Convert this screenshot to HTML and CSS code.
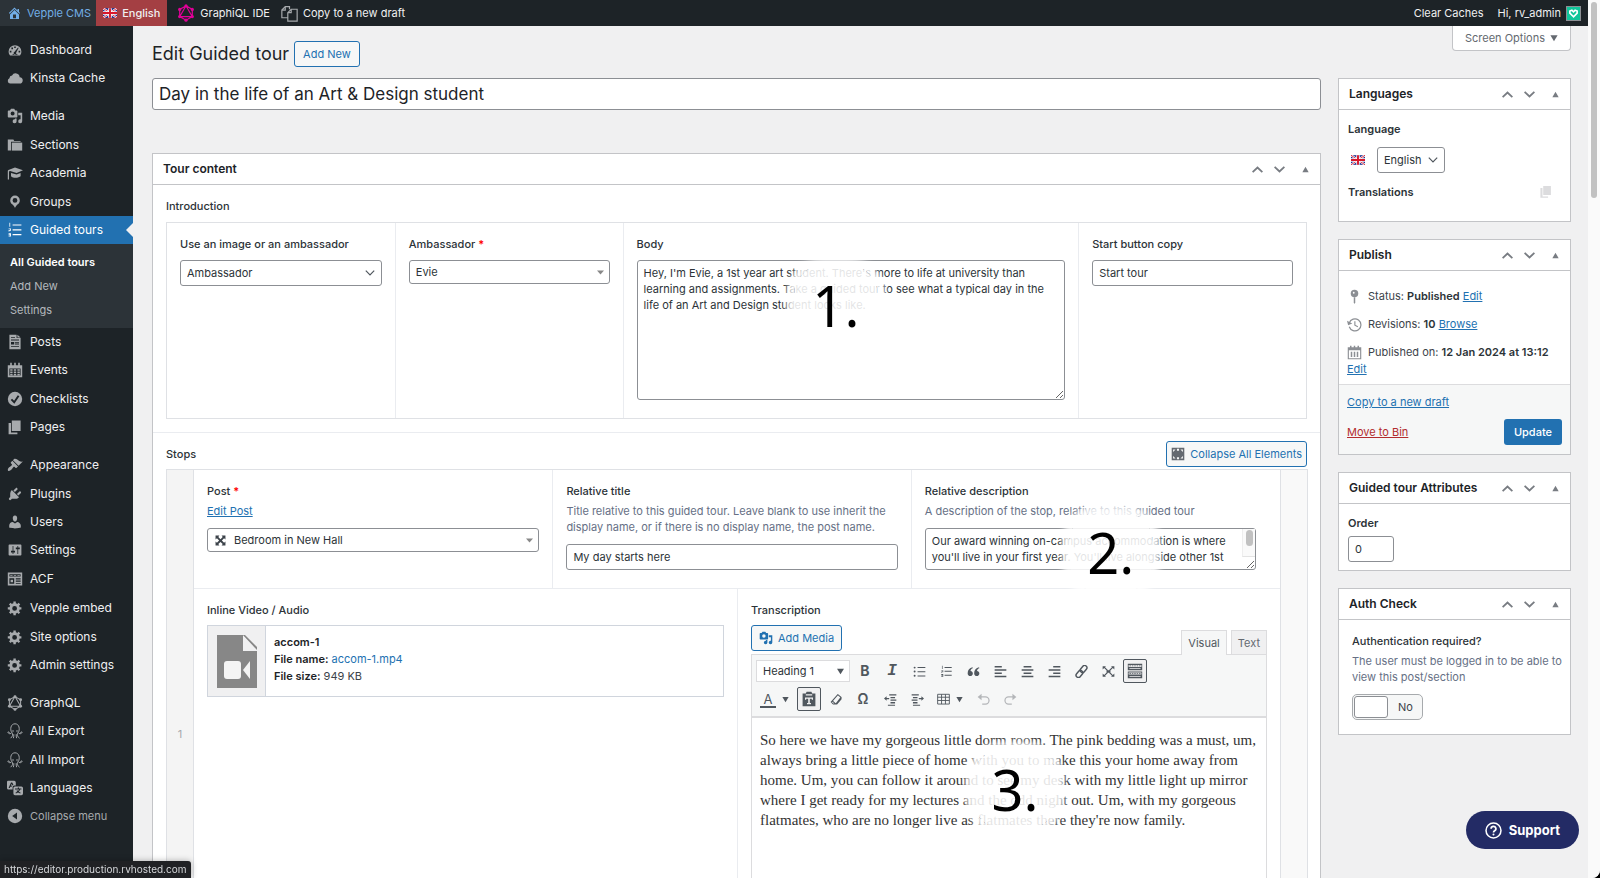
FILE: index.html
```html
<!DOCTYPE html>
<html lang="en">
<head>
  <meta charset="UTF-8" />
  <meta name="viewport" content="width=device-width, initial-scale=1.0" />
  <title>Edit Guided tour</title>
  <link rel="stylesheet" href="styles.css">
</head>
<body>
  <svg class="sprite" aria-hidden="true">
    <symbol id="i-home" viewBox="0 0 20 20"><path d="M16 8.500l1.530 1.530-1.060 1.060L10 4.600l-6.470 6.490-1.060-1.060L10 2.500l4 4v-2h2v4zm-6-2.460l6 5.990V18H4v-5.970zM12 17v-5H8v5h4z"/></symbol>
    <symbol id="i-flag" viewBox="0 0 16 11"><path fill="#1d2f8f" d="M0 0h16v11H0z"/><path stroke="#fff" stroke-width="2.400" d="M0 0l16 11M16 0L0 11"/><path stroke="#d8182c" stroke-width="1" d="M0 0l16 11M16 0L0 11"/><path stroke="#fff" stroke-width="4" d="M8 0v11M0 5.500h16"/><path stroke="#d8182c" stroke-width="2.200" d="M8 0v11M0 5.500h16"/></symbol>
    <symbol id="i-graphql" viewBox="0 0 20 20"><path fill="none" stroke="currentColor" stroke-width="1.300" d="M10 2l7 4v8l-7 4-7-4V6zM10 2L3 14h14z"/><circle cx="10" cy="2" r="1.800"/><circle cx="17" cy="6" r="1.800"/><circle cx="17" cy="14" r="1.800"/><circle cx="10" cy="18" r="1.800"/><circle cx="3" cy="14" r="1.800"/><circle cx="3" cy="6" r="1.800"/></symbol>
    <symbol id="i-copy" viewBox="0 0 20 20"><path fill="none" stroke="currentColor" stroke-width="1.400" d="M8 15H1V6l4-4h5v3M5 2v4H1M8 19V9l4-4h7v14zM12 5v4H8"/></symbol>
    <symbol id="i-heart" viewBox="0 0 16 16"><path fill="#10c59a" d="M0 0h16v16H0z"/><path fill="none" stroke="#fff" stroke-width="2" d="M8 12L3.500 7.500 3.500 5 6 4l2 2 2-2 2.500 1v2.500z"/></symbol>
    <symbol id="i-dashboard" viewBox="0 0 20 20"><path fill-rule="evenodd" d="M3.760 17h12.480c1.100-1.400 1.760-3.100 1.760-5a8 8 0 0 0-16 0c0 1.900.660 3.600 1.760 5zM9 5.500h2v2H9zM5.500 7h2v2h-2zM3.500 11h2v2h-2zM14.500 11h2v2h-2zM13.800 7l.7.600-3 5.400a1.700 1.700 0 1 1-2-.900zM7 15h6v1H7z"/></symbol>
    <symbol id="i-cloud" viewBox="0 0 20 20"><path d="M15.800 9a5 5 0 0 0-9.500-2A3.500 3.500 0 0 0 3 10.200 3.600 3.600 0 0 0 4 17h11.500A4 4 0 0 0 15.800 9z"/></symbol>
    <symbol id="i-media" viewBox="0 0 20 20"><path fill-rule="evenodd" d="M13 11V4c0-.550-.450-1-1-1h-1.670L9 1H5L3.670 3H2c-.550 0-1 .450-1 1v7c0 .550.450 1 1 1h10c.550 0 1-.450 1-1zM7 4.500a2.500 2.500 0 1 1 0 5 2.500 2.500 0 0 1 0-5zM14 6h5v10.500a2.500 2.500 0 1 1-2-2.450V9h-3V6zm-4 8.050V13h2v3.500a2.500 2.500 0 1 1-2-2.450z"/></symbol>
    <symbol id="i-folder" viewBox="0 0 20 20"><path d="M1 3h7l1 2h8v1H5v11H1z"/><path d="M6 7h13v10H6z"/></symbol>
    <symbol id="i-learn" viewBox="0 0 20 20"><path d="M10 3l10 3.500-8 3.500-8-2.500c-1 0-1.500.500-1.500 1.500v9H1V8c0-1 .500-2 1.500-2z"/><path d="M5 10l7 2 5-2v4c-2 2-9 3-12 0z"/></symbol>
    <symbol id="i-location" viewBox="0 0 20 20"><path fill-rule="evenodd" d="M10 2a6 6 0 0 0-6 6c0 2.020 1.170 3.710 2.530 4.890 1.300 1.100 3 3.100 3.470 4.540.470-1.440 2.170-3.440 3.470-4.540C14.830 11.710 16 10.020 16 8a6 6 0 0 0-6-6zm0 3a3 3 0 1 1 0 6 3 3 0 0 1 0-6z"/></symbol>
    <symbol id="i-ol" viewBox="0 0 20 20"><path d="M7 3h11v1.500H7zM7 9h11v1.500H7zM7 15h11v1.500H7zM3 1h1v5H3zM2 8h3v3H3v1H2v-2h2V9H2zM2 14h3v4H2v-1h2v-1H2z"/></symbol>
    <symbol id="i-doc" viewBox="0 0 20 20"><path fill-rule="evenodd" d="M3 1h9v4h5v14H3zM13 1l4 3.500h-4zM5 4h5v1H5zM5 7h10v1H5zM5 10h4v3H5zM10 10h5v1h-5zM10 12h5v1h-5zM5 15h10v1H5z"/></symbol>
    <symbol id="i-calendar" viewBox="0 0 20 20"><path fill-rule="evenodd" d="M1 4h3V1h2v3h3V1h2v3h3V1h2v3h3v15H1zM3 8h14v9H3z"/><path d="M4 9h3v2H4zM8.500 9h3v2h-3zM13 9h3v2h-3zM4 12h3v2H4zM8.500 12h3v2h-3zM13 12h3v2h-3zM4 15h3v2H4zM8.500 15h3v2h-3zM13 15h3v2h-3z"/></symbol>
    <symbol id="i-check" viewBox="0 0 20 20"><circle cx="10" cy="10" r="9"/><path fill="none" stroke="#1d2327" stroke-width="2.400" d="M5.500 10.500l3.500 3.500 5.500-8"/></symbol>
    <symbol id="i-page" viewBox="0 0 20 20"><path d="M6 15V2h11v13zM5 17h8v2H2V5h3z"/></symbol>
    <symbol id="i-brush" viewBox="0 0 20 20"><path d="M14.480 11.060L7.410 3.990l1.500-1.500c.500-.560 2.300-.470 3.510.320 1.210.800 1.430 1.280 2.910 2.100 1.180.640 2.450 1.260 4.450.850zm-.710.710L6.700 4.700 4.930 6.470c-.390.390-.390 1.020 0 1.410l1.060 1.060c.390.390.390 1.030 0 1.420-.600.600-1.430 1.110-2.210 1.690-.350.260-.700.530-1.010.840C1.430 14.230.400 16.080 1.400 17.070c.990 1 2.840-.030 4.180-1.360.310-.310.580-.660.850-1.020.570-.780 1.080-1.610 1.690-2.210.390-.390 1.020-.390 1.410 0l1.060 1.060c.390.390 1.020.390 1.410 0z"/></symbol>
    <symbol id="i-plug" viewBox="0 0 20 20"><path d="M13.110 4.360L9.870 7.600 8 5.730l3.240-3.240c.350-.340 1.050-.200 1.560.320.520.510.660 1.210.310 1.550zm-8 1.770l.910-1.120 9.010 9.010-1.190.840c-.710.710-2.630 1.160-3.820 1.160H6.140L4.900 17.260c-.590.590-1.540.590-2.120 0-.590-.580-.590-1.530 0-2.120l1.240-1.240v-3.880c0-1.130.400-3.190 1.090-3.890zm7.260 3.970l3.240-3.240c.340-.350 1.040-.210 1.550.310.520.510.660 1.210.310 1.550l-3.240 3.250z"/></symbol>
    <symbol id="i-user" viewBox="0 0 20 20"><path d="M10 9.250c-2.270 0-2.730-3.440-2.730-3.440C7 4.020 7.820 2 9.970 2c2.160 0 2.980 2.020 2.710 3.810 0 0-.410 3.440-2.680 3.440zm0 2.570L12.720 10c2.390 0 4.520 2.330 4.520 4.530v2.490s-3.650 1.130-7.240 1.130c-3.650 0-7.240-1.130-7.240-1.130v-2.490c0-2.250 1.940-4.480 4.470-4.480z"/></symbol>
    <symbol id="i-sliders" viewBox="0 0 20 20"><path fill-rule="evenodd" d="M18 16V4c0-.550-.450-1-1-1H3c-.550 0-1 .450-1 1v12c0 .550.450 1 1 1h14c.550 0 1-.450 1-1zM8 11h2v2H8v2H7v-2H5v-2h2V5h1zm5-2h-2V7h2V5h1v2h2v2h-2v6h-1z"/></symbol>
    <symbol id="i-acf" viewBox="0 0 20 20"><path fill-rule="evenodd" d="M1 2h18v16H1zM3 4v3h14V4zM3 9v7h6V9zM11 9v1.500h6V9zM11 12v1.500h6V12zM11 15v1h6v-1z"/><path d="M4 5h3v1H4zM8.500 5h3v1h-3zM13 5h3v1h-3zM4.500 11h3v3h-3z"/></symbol>
    <symbol id="i-gear" viewBox="0 0 20 20"><path fill-rule="evenodd" d="M18 12h-2.180c-.170.700-.440 1.350-.810 1.930l1.540 1.540-2.100 2.100-1.540-1.540c-.580.360-1.230.630-1.910.790V19H8v-2.180c-.680-.160-1.330-.430-1.910-.790l-1.540 1.540-2.120-2.120 1.540-1.540c-.360-.580-.630-1.230-.790-1.910H1V9.030h2.170c.160-.700.440-1.350.800-1.940L2.430 5.550l2.100-2.100 1.540 1.540c.580-.370 1.240-.640 1.930-.810V2h3v2.180c.680.160 1.330.430 1.910.790l1.540-1.540 2.120 2.120-1.540 1.540c.360.590.640 1.240.800 1.940H18zM9.500 13.500a3 3 0 1 0 0-6 3 3 0 0 0 0 6z"/></symbol>
    <symbol id="i-octopus" viewBox="0 0 20 20"><path fill="none" stroke="currentColor" stroke-width="1.200" d="M6 12C3.500 8 4.500 1 10 1s6.500 7 4 11M6 12c-1 2-4 2-5-.500 1-1 2 0 2 1M14 12c1 2 4 2 5-.500-1-1-2 0-2 1M6 12c2 2 1 5-1.500 7M14 12c-2 2-1 5 1.500 7M8.500 14c0 2 0 3-.500 5M11.500 14c0 2 0 3 .500 5"/><circle cx="7.500" cy="10" r="1"/><circle cx="12.500" cy="10" r="1"/></symbol>
    <symbol id="i-translate" viewBox="0 0 20 20"><path fill-rule="evenodd" d="M1 1h8a2 2 0 0 1 2 2v4H9a2 2 0 0 0-2 2v3H2a2 2 0 0 1-2-2V2zM5 3L2 10h1.500L4 8.500h2V7H4.800l.8-2L7 7 8 6 6.500 3z"/><path fill-rule="evenodd" d="M10 8h8a2 2 0 0 1 2 2v7a2 2 0 0 1-2 2h-8a2 2 0 0 1-2-2v-7a2 2 0 0 1 2-2zm3.500 1.500v1H10V12h5c-.3.800-.700 1.300-1.200 1.800l-1-1-1 .8 1 1.100L10.500 16l.700 1 2.600-1.500L16.500 17l.6-1-2.300-1.400c.8-.8 1.300-1.600 1.600-2.600H18v-1.500h-3v-1z"/></symbol>
    <symbol id="i-collapse" viewBox="0 0 20 20"><circle cx="10" cy="10" r="9"/><path fill="#1d2327" d="M12.500 5.500v9L6.500 10z"/></symbol>
    <symbol id="i-up" viewBox="0 0 20 20"><path fill="none" stroke="currentColor" stroke-width="2.800" d="M2.500 14l7.500-7 7.500 7"/></symbol>
    <symbol id="i-down" viewBox="0 0 20 20"><path fill="none" stroke="currentColor" stroke-width="2.800" d="M2.500 6l7.500 7 7.500-7"/></symbol>
    <symbol id="i-tri" viewBox="0 0 10 10"><path d="M5 1l4.500 8h-9z"/></symbol>
    <symbol id="i-tri-down" viewBox="0 0 10 10"><path d="M5 9L.5 1.500h9z"/></symbol>
    <symbol id="i-pin" viewBox="0 0 20 20"><circle cx="10" cy="6" r="5"/><path d="M9 11h2v7l-1 2-1-2z"/><circle cx="9" cy="5" r="1.200" fill="#fff"/></symbol>
    <symbol id="i-history" viewBox="0 0 20 20"><path fill="none" stroke="currentColor" stroke-width="1.600" d="M3 8a8 8 0 1 1 0 5"/><path d="M0 5l1.500 6L7 8.500z"/><path fill="none" stroke="currentColor" stroke-width="1.500" d="M10.500 5.500V11l4 2"/></symbol>
    <symbol id="i-cal2" viewBox="0 0 20 20"><path fill-rule="evenodd" d="M1 3h3V1h2v2h3V1h2v2h3V1h2v2h3v16H1zM2.500 7v10.500h15V7z"/><path d="M5 9h2v7H5zM9 9h2v7H9zM13 9h2v7h-2z"/></symbol>
    <symbol id="i-elements" viewBox="0 0 20 20"><path fill-rule="evenodd" d="M1 1h18v18H1zM3 3.500v3.500l3.500-3.500zM13.500 3.500L17 7V3.500zM3 13v3.500h3.500zM17 13l-3.500 3.500H17zM8.500 2.500v3h3v-3zM8.500 14.500v3h3v-3z"/></symbol>
    <symbol id="i-expand" viewBox="0 0 20 20"><path d="M1 1h7L6 3.500l4 4 4-4L12 1h7v7l-2.500-2-4 4 4 4 2.500-2v7h-7l2-2.500-4-4-4 4L8 19H1v-7l2.500 2 4-4-4-4L1 8z"/></symbol>
    <symbol id="i-video" viewBox="0 0 40 53"><path fill="#878787" d="M0 0h26l14 14v39H0z"/><path fill="#f0f0f1" d="M26 0l14 14v2H26z"/><path fill="#878787" d="M28 0h-2l14 15v-3z"/><rect x="7" y="26" width="17" height="18" rx="3" fill="#f4f4f4"/><path fill="#f4f4f4" d="M33 26v18l-7-9z"/></symbol>
    <symbol id="i-ul" viewBox="0 0 20 20"><path d="M7 3h12v1.500H7zM7 9.500h12V11H7zM7 16h12v1.500H7z"/><circle cx="2.500" cy="4" r="1.500"/><circle cx="2.500" cy="10" r="1.500"/><circle cx="2.500" cy="16.500" r="1.500"/></symbol>
    <symbol id="i-quote" viewBox="0 0 20 20"><path d="M8.500 3.500C4 4.500 1 8 1 12.500 1 15 2.700 17 5 17s4-1.700 4-4-1.600-3.800-3.600-3.800C5.500 7 7 5.500 9 5zM18.500 3.500C14 4.500 11 8 11 12.500c0 2.500 1.700 4.500 4 4.500s4-1.700 4-4-1.600-3.800-3.600-3.800C15.500 7 17 5.500 19 5z"/></symbol>
    <symbol id="i-left" viewBox="0 0 20 20"><path d="M1 1.500h11v2.400H1zM1 6.500h18v2.400H1zM1 11.500h11v2.400H1zM1 16.500h18v2.400H1z"/></symbol>
    <symbol id="i-center" viewBox="0 0 20 20"><path d="M4 1.500h12v2.400H4zM1 6.500h18v2.400H1zM4 11.500h12v2.400H4zM1 16.500h18v2.400H1z"/></symbol>
    <symbol id="i-right" viewBox="0 0 20 20"><path d="M8 1.500h11v2.400H8zM1 6.500h18v2.400H1zM8 11.500h11v2.400H8zM1 16.500h18v2.400H1z"/></symbol>
    <symbol id="i-link" viewBox="0 0 20 20"><g fill="none" stroke="currentColor" stroke-width="2.200" transform="rotate(-50 10 10)"><rect x="-1" y="6.500" width="12" height="7" rx="3.500"/><rect x="9" y="6.500" width="12" height="7" rx="3.500"/></g></symbol>
    <symbol id="i-full" viewBox="0 0 20 20"><path d="M1 2h5L4.700 3.300 9 7.600 7.600 9 3.300 4.700 1 7zM19 2v5l-2.300-2.300L12.400 9 11 7.600l4.300-4.300L14 2zM1 18v-5l2.300 2.300L7.600 11 9 12.400l-4.300 4.300L6 18zM19 18h-5l1.300-1.300L11 12.400l1.400-1.400 4.300 4.300L19 13zM7 8h6v4H7z"/></symbol>
    <symbol id="i-kitchen" viewBox="0 0 20 20"><path fill-rule="evenodd" d="M1 1h18v8H1zM2 2.500V5h16V2.500zM1 10.500h18V19H1zM2 12v2.500h16V12z"/><path d="M3 3h2v1H3zM6 3h2v1H6zM9 3h2v1H9zM12 3h2v1h-2zM15 3h2v1h-2zM3 12.700h2v1H3zM6 12.700h2v1H6zM9 12.700h2v1H9zM12 12.700h2v1h-2zM15 12.700h2v1h-2z"/><path fill="#f0f0f1" d="M3 6.500h14v1H3zM3 16.300h14v1H3z"/></symbol>
    <symbol id="i-paste" viewBox="0 0 20 20"><path fill-rule="evenodd" d="M2 3h4l1-2h6l1 2h4v16H2zM6 4v1.500h8V4zM5 8v3h1.500V9.700H9V15H7.500v1.500h5V15H11V9.700h2.500V11H15V8z"/></symbol>
    <symbol id="i-eraser" viewBox="0 0 20 20"><path fill="none" stroke="currentColor" stroke-width="1.600" d="M12 2.500l5 4-8 10.500H5l-3-3zM3.500 12l5.500 5M17 6.500v3l-7 8"/></symbol>
    <symbol id="i-outdent" viewBox="0 0 20 20"><path d="M8 2h11v2H8zM10 6h7v2h-7zM10 10h9v2h-9zM10 14h7v2h-7zM6 18h11v1.500H6zM4 5v2.500h4v2H4V12L0 8.500z"/></symbol>
    <symbol id="i-indent" viewBox="0 0 20 20"><path d="M1 2h11v2H1zM3 6h7v2H3zM1 10h9v2H1zM3 14h7v2H3zM3 18h11v1.500H3zM16 5v2.500h-4v2h4V12l4-3.500z"/></symbol>
    <symbol id="i-table" viewBox="0 0 20 20"><path fill="none" stroke="currentColor" stroke-width="1.400" d="M1 2h18v15H1zM1 6.500h18M1 11.500h18M7 2v15M13 2v15"/></symbol>
    <symbol id="i-undo" viewBox="0 0 20 20"><path fill="none" stroke="currentColor" stroke-width="1.900" d="M5 6h8a5 5 0 0 1 0 11H8"/><path d="M7 1v10L1 6z"/></symbol>
    <symbol id="i-redo" viewBox="0 0 20 20"><path fill="none" stroke="currentColor" stroke-width="1.900" d="M15 6H7a5 5 0 0 0 0 11h5"/><path d="M13 1v10l6-5z"/></symbol>
  </svg>

  <div class="window">
    <header class="adminbar">
      <a class="bar-item site" href="#"><svg><use href="#i-home"/></svg>Vepple CMS</a>
      <a class="bar-item lang" href="#"><svg class="flag"><use href="#i-flag"/></svg>English</a>
      <a class="bar-item graphiql" href="#"><svg><use href="#i-graphql"/></svg>GraphiQL IDE</a>
      <a class="bar-item copy" href="#"><svg><use href="#i-copy"/></svg>Copy to a new draft</a>
      <a class="bar-item push" href="#">Clear Caches</a>
      <a class="bar-item account" href="#">Hi, rv_admin<svg class="avatar"><use href="#i-heart"/></svg></a>
    </header>

    <nav class="menu">
      <a href="#"><svg><use href="#i-dashboard"/></svg>Dashboard</a>
      <a href="#"><svg><use href="#i-cloud"/></svg>Kinsta Cache</a>
      <hr>
      <a href="#"><svg><use href="#i-media"/></svg>Media</a>
      <a class="tall" href="#"><svg><use href="#i-folder"/></svg>Sections</a>
      <a href="#"><svg><use href="#i-learn"/></svg>Academia</a>
      <a class="tall" href="#"><svg><use href="#i-location"/></svg>Groups</a>
      <a class="current" href="#"><svg><use href="#i-ol"/></svg>Guided tours</a>
      <div class="submenu">
        <a class="active" href="#">All Guided tours</a>
        <a href="#">Add New</a>
        <a href="#">Settings</a>
      </div>
      <a href="#"><svg><use href="#i-doc"/></svg>Posts</a>
      <a href="#"><svg><use href="#i-calendar"/></svg>Events</a>
      <a class="tall" href="#"><svg><use href="#i-check"/></svg>Checklists</a>
      <a href="#"><svg><use href="#i-page"/></svg>Pages</a>
      <hr>
      <a href="#"><svg><use href="#i-brush"/></svg>Appearance</a>
      <a class="tall" href="#"><svg><use href="#i-plug"/></svg>Plugins</a>
      <a href="#"><svg><use href="#i-user"/></svg>Users</a>
      <a href="#"><svg><use href="#i-sliders"/></svg>Settings</a>
      <a class="tall" href="#"><svg><use href="#i-acf"/></svg>ACF</a>
      <a class="tall" href="#"><svg><use href="#i-gear"/></svg>Vepple embed</a>
      <a class="tall" href="#"><svg><use href="#i-gear"/></svg>Site options</a>
      <a href="#"><svg><use href="#i-gear"/></svg>Admin settings</a>
      <hr>
      <a href="#"><svg><use href="#i-graphql"/></svg>GraphQL</a>
      <a href="#"><svg><use href="#i-octopus"/></svg>All Export</a>
      <a class="tall" href="#"><svg><use href="#i-octopus"/></svg>All Import</a>
      <a href="#"><svg><use href="#i-translate"/></svg>Languages</a>
      <button class="collapse" type="button"><svg><use href="#i-collapse"/></svg>Collapse menu</button>
    </nav>

    <main class="content">
      <button class="screen-options" type="button">Screen Options <svg><use href="#i-tri-down"/></svg></button>
      <div class="heading">
        <h1>Edit Guided tour</h1>
        <a class="btn" href="#">Add New</a>
      </div>

      <div class="columns">
        <div class="primary">
          <input class="title" type="text" aria-label="Title" value="Day in the life of an Art &amp; Design student">

          <section class="box tour">
            <div class="box-head">
              <h2>Tour content</h2>
              <button type="button" aria-label="Move up"><svg><use href="#i-up"/></svg></button>
              <button type="button" aria-label="Move down"><svg><use href="#i-down"/></svg></button>
              <button type="button" aria-label="Toggle"><svg class="tri"><use href="#i-tri"/></svg></button>
            </div>

            <div class="acf-field intro">
              <div class="label">Introduction</div>
              <div class="group">
                <div class="cell">
                  <label class="label" for="kind">Use an image or an ambassador</label>
                  <select id="kind"><option>Ambassador</option></select>
                </div>
                <div class="cell">
                  <label class="label" for="ambassador">Ambassador <b class="req">*</b></label>
                  <select id="ambassador" class="select2"><option>Evie</option></select>
                </div>
                <div class="cell">
                  <label class="label" for="copy">Body</label>
                  <textarea id="copy" class="body-copy">Hey, I'm Evie, a 1st year art student. There's more to life at university than learning and assignments. Take a guided tour to see what a typical day in the life of an Art and Design student looks like.</textarea>
                  <span class="marker one">1.</span>
                </div>
                <div class="cell">
                  <label class="label" for="start">Start button copy</label>
                  <input id="start" type="text" value="Start tour">
                </div>
              </div>
            </div>

            <div class="acf-field stops">
              <div class="stops-head">
                <div class="label">Stops</div>
                <button class="btn" type="button"><svg><use href="#i-elements"/></svg>Collapse All Elements</button>
              </div>
              <div class="repeater">
                <div class="handle">1</div>
                <div class="fields">
                  <div class="row thirds">
                    <div class="cell">
                      <label class="label" for="post">Post <b class="req">*</b></label>
                      <a class="edit-post" href="#">Edit Post</a>
                      <div class="post-select">
                        <svg><use href="#i-expand"/></svg>
                        <select id="post" class="select2"><option>Bedroom in New Hall</option></select>
                      </div>
                    </div>
                    <div class="cell">
                      <label class="label" for="rel-title">Relative title</label>
                      <p class="hint">Title relative to this guided tour. Leave blank to use inherit the display name, or if there is no display name, the post name.</p>
                      <input id="rel-title" type="text" value="My day starts here">
                    </div>
                    <div class="cell">
                      <label class="label" for="rel-desc">Relative description</label>
                      <p class="hint">A description of the stop, relative to this guided tour</p>
                      <div class="scroll-area">
                        <textarea id="rel-desc">Our award winning on-campus accommodation is where you'll live in your first year. You'll live alongside other 1st</textarea>
                        <span class="mini-bar"></span>
                      </div>
                      <span class="marker two">2.</span>
                    </div>
                  </div>
                  <div class="row halves">
                    <div class="cell">
                      <div class="label">Inline Video / Audio</div>
                      <div class="file">
                        <div class="file-icon"><svg><use href="#i-video"/></svg></div>
                        <div class="file-info">
                          <p><b>accom-1</b></p>
                          <p><b>File name:</b> <a href="#">accom-1.mp4</a></p>
                          <p><b>File size:</b> 949 KB</p>
                        </div>
                      </div>
                    </div>
                    <div class="cell">
                      <div class="label">Transcription</div>
                      <div class="editor-tools">
                        <button class="btn" type="button"><svg><use href="#i-media"/></svg>Add Media</button>
                        <button class="tab on" type="button">Visual</button>
                        <button class="tab" type="button">Text</button>
                      </div>
                      <div class="editor">
                        <div class="toolbar">
                          <div class="tools">
                            <select class="format" aria-label="Format"><option>Heading 1</option></select>
                            <button type="button" aria-label="Bold" class="bold">B</button>
                            <button type="button" aria-label="Italic" class="italic">I</button>
                            <button type="button" aria-label="Bulleted list"><svg><use href="#i-ul"/></svg></button>
                            <button type="button" aria-label="Numbered list"><svg><use href="#i-ol"/></svg></button>
                            <button type="button" aria-label="Blockquote"><svg><use href="#i-quote"/></svg></button>
                            <button type="button" aria-label="Align left"><svg><use href="#i-left"/></svg></button>
                            <button type="button" aria-label="Align centre"><svg><use href="#i-center"/></svg></button>
                            <button type="button" aria-label="Align right"><svg><use href="#i-right"/></svg></button>
                            <button type="button" aria-label="Link"><svg><use href="#i-link"/></svg></button>
                            <button type="button" aria-label="Fullscreen"><svg><use href="#i-full"/></svg></button>
                            <button type="button" aria-label="Toolbar toggle" class="pressed"><svg><use href="#i-kitchen"/></svg></button>
                          </div>
                          <div class="tools">
                            <button type="button" aria-label="Text colour" class="colour">A</button>
                            <button type="button" aria-label="Colours" class="caret"><svg><use href="#i-tri-down"/></svg></button>
                            <button type="button" aria-label="Paste as text" class="pressed"><svg><use href="#i-paste"/></svg></button>
                            <button type="button" aria-label="Clear formatting"><svg><use href="#i-eraser"/></svg></button>
                            <button type="button" aria-label="Special character" class="omega">Ω</button>
                            <button type="button" aria-label="Outdent"><svg><use href="#i-outdent"/></svg></button>
                            <button type="button" aria-label="Indent"><svg><use href="#i-indent"/></svg></button>
                            <button type="button" aria-label="Table" class="table-btn"><svg><use href="#i-table"/></svg><svg class="small"><use href="#i-tri-down"/></svg></button>
                            <button type="button" aria-label="Undo" class="off"><svg><use href="#i-undo"/></svg></button>
                            <button type="button" aria-label="Redo" class="off"><svg><use href="#i-redo"/></svg></button>
                          </div>
                        </div>
                        <div class="editor-body" contenteditable="true" spellcheck="false">So here we have my gorgeous little dorm room. The pink bedding was a must, um, always bring a little piece of home with you to make this your home away from home. Um, you can follow it around to see my desk with my little light up mirror where I get ready for my lectures and the odd night out. Um, with my gorgeous flatmates, who are no longer live as flatmates there they're now family.</div>
                        <span class="marker three">3.</span>
                      </div>
                    </div>
                  </div>
                </div>
                <div class="handle end"></div>
              </div>
            </div>
          </section>
        </div>

        <aside class="side">
          <section class="box languages">
            <div class="box-head">
              <h2>Languages</h2>
              <button type="button" aria-label="Move up"><svg><use href="#i-up"/></svg></button>
              <button type="button" aria-label="Move down"><svg><use href="#i-down"/></svg></button>
              <button type="button" aria-label="Toggle"><svg class="tri"><use href="#i-tri"/></svg></button>
            </div>
            <div class="box-body">
              <label class="strong" for="language">Language</label>
              <div class="lang-row">
                <svg class="flag"><use href="#i-flag"/></svg>
                <select id="language"><option>English</option></select>
              </div>
              <div class="trans-row"><span class="strong">Translations</span><svg><use href="#i-page"/></svg></div>
            </div>
          </section>

          <section class="box publish">
            <div class="box-head">
              <h2>Publish</h2>
              <button type="button" aria-label="Move up"><svg><use href="#i-up"/></svg></button>
              <button type="button" aria-label="Move down"><svg><use href="#i-down"/></svg></button>
              <button type="button" aria-label="Toggle"><svg class="tri"><use href="#i-tri"/></svg></button>
            </div>
            <div class="publish-info">
              <p><svg><use href="#i-pin"/></svg>Status: <b>Published</b> <a href="#">Edit</a></p>
              <p><svg><use href="#i-history"/></svg>Revisions: <b>10</b> <a href="#">Browse</a></p>
              <p><svg><use href="#i-cal2"/></svg>Published on: <b>12 Jan 2024 at 13:12</b> <a href="#">Edit</a></p>
            </div>
            <div class="publish-actions">
              <a href="#">Copy to a new draft</a>
              <div class="actions-row">
                <a class="bin" href="#">Move to Bin</a>
                <button class="update" type="button">Update</button>
              </div>
            </div>
          </section>

          <section class="box attributes">
            <div class="box-head">
              <h2>Guided tour Attributes</h2>
              <button type="button" aria-label="Move up"><svg><use href="#i-up"/></svg></button>
              <button type="button" aria-label="Move down"><svg><use href="#i-down"/></svg></button>
              <button type="button" aria-label="Toggle"><svg class="tri"><use href="#i-tri"/></svg></button>
            </div>
            <div class="box-body">
              <label class="strong" for="order">Order</label>
              <input id="order" type="text" value="0">
            </div>
          </section>

          <section class="box auth">
            <div class="box-head">
              <h2>Auth Check</h2>
              <button type="button" aria-label="Move up"><svg><use href="#i-up"/></svg></button>
              <button type="button" aria-label="Move down"><svg><use href="#i-down"/></svg></button>
              <button type="button" aria-label="Toggle"><svg class="tri"><use href="#i-tri"/></svg></button>
            </div>
            <div class="auth-body">
              <label class="label" for="auth">Authentication required?</label>
              <p class="hint">The user must be logged in to be able to view this post/section</p>
              <label class="switch"><input id="auth" type="checkbox"><span class="knob"></span><span>No</span></label>
            </div>
          </section>
        </aside>
      </div>
    </main>

    <div class="scrollbar"><span></span></div>
  </div>

  <button class="support" type="button">
    <svg viewBox="0 0 20 20"><circle cx="10" cy="10" r="8.800" fill="none" stroke="#fff" stroke-width="1.800"/><path fill="none" stroke="#fff" stroke-width="2" d="M7.200 8a2.800 2.800 0 1 1 4.200 2.300c-1 .600-1.400 1-1.400 2"/><circle cx="10" cy="14.700" r="1.200" fill="#fff"/></svg>
    Support
  </button>
  <div class="status">https://editor.production.rvhosted.com</div>
</body>
</html>
```

FILE: styles.css
```css
:root {
  --dark: #1d2327;
  --blue: #2271b1;
  --grey: #f0f0f1;
  --line: #c3c4c7;
  --text: #3c434a;
}
* {
  box-sizing: border-box;
}
html {
  background: #000;
}
body {
  margin: 0;
  font-family: Inter, 'Liberation Sans', sans-serif;
  font-size: 11px;
  line-height: 16px;
  color: var(--text);
}
h1, h2, p {
  margin: 0;
}
button, input, select, textarea {
  font: inherit;
  color: inherit;
  margin: 0;
}
button {
  border: 0;
  padding: 0;
  background: none;
  cursor: pointer;
}
a {
  color: var(--blue);
}
b {
  font-weight: 600;
}
svg {
  fill: currentColor;
  flex: none;
}
.sprite {
  display: none;
}
.window {
  display: grid;
  grid-template-columns: 133px 1fr 12px;
  grid-template-rows: 26px 1fr;
  height: 100vh;
  overflow: hidden;
  background: var(--grey);
  border-bottom-right-radius: 8px;
}

/* top bar */
.adminbar {
  grid-column: 1 / 3;
  display: flex;
  background: var(--dark);
}
.bar-item {
  display: flex;
  align-items: center;
  gap: 5px;
  padding: 0 7px;
  color: #f0f0f1;
  text-decoration: none;
  white-space: nowrap;
}
.bar-item svg {
  width: 16px;
  height: 16px;
}
.bar-item .flag, .lang-row .flag {
  width: 14px;
  height: 10px;
}
.site {
  padding-right: 5px;
  background: #2c3338;
  color: #72aee6;
}
.site svg {
  width: 15px;
}
.lang {
  background: #a43f43;
  font-weight: 500;
}
.graphiql {
  padding: 0 4px 0 10px;
}
.graphiql svg {
  width: 18px;
  height: 18px;
  color: #e10098;
}
.copy svg {
  width: 17px;
  height: 17px;
  color: #a7aaad;
}
.push {
  margin-left: auto;
}
.account .avatar {
  width: 15px;
  height: 15px;
  border: 1px solid #8c8f94;
}

/* side menu */
.menu {
  background: var(--dark);
  padding-top: 10px;
}
.menu > a, .collapse {
  display: flex;
  align-items: center;
  gap: 7px;
  width: 100%;
  height: 28px;
  padding-left: 7px;
  color: #f0f0f1;
  font-size: 12px;
  text-decoration: none;
  white-space: nowrap;
}
.menu > .tall {
  height: 29px;
}
.menu svg {
  width: 16px;
  height: 16px;
  color: #a7aaad;
}
.menu hr {
  height: 10px;
  margin: 0;
  border: 0;
}
.menu > .current {
  position: relative;
  background: var(--blue);
  color: #fff;
}
.menu > .current svg {
  color: #fff;
}
.current::after {
  content: "";
  position: absolute;
  right: 0;
  border: 7px solid transparent;
  border-right-color: var(--grey);
  border-left: 0;
}
.submenu {
  display: flex;
  flex-direction: column;
  padding: 6px 10px;
  background: #2c3338;
}
.submenu a {
  line-height: 24px;
  color: #b4b9be;
  text-decoration: none;
}
.submenu .active {
  color: #fff;
  font-weight: 600;
}
.menu .collapse {
  color: #a7aaad;
  font-size: 11px;
}

/* page */
.content {
  position: relative;
  padding: 14px 17px 0 19px;
  min-height: 0;
}
.screen-options {
  position: absolute;
  top: 0;
  right: 17px;
  display: flex;
  align-items: center;
  gap: 5px;
  height: 25px;
  padding: 0 12px;
  border: 1px solid var(--line);
  border-top: 0;
  border-radius: 0 0 4px 4px;
  background: #fff;
  color: #646970;
}
.screen-options svg {
  width: 8px;
  height: 8px;
}
.heading {
  display: flex;
  align-items: center;
  gap: 5px;
  height: 27px;
}
h1 {
  font-size: 18px;
  font-weight: 400;
  color: var(--dark);
}
.btn {
  display: flex;
  align-items: center;
  gap: 5px;
  height: 26px;
  padding: 0 8px;
  border: 1px solid var(--blue);
  border-radius: 3px;
  background: #f6f7f7;
  color: var(--blue);
  text-decoration: none;
  white-space: nowrap;
}
.columns {
  display: grid;
  grid-template-columns: 1fr 233px;
  gap: 17px;
  margin-top: 11px;
}
.primary {
  min-width: 0;
}
input[type=text], select, textarea {
  display: block;
  width: 100%;
  height: 26px;
  padding: 0 6px;
  border: 1px solid #8c8f94;
  border-radius: 3px;
  background-color: #fff;
  color: #2c3338;
}
input[type=text].title {
  height: 32px;
  margin-bottom: 43px;
  color: var(--dark);
  font-size: 17px;
}
select {
  appearance: none;
  background: #fff url("data:image/svg+xml,%3Csvg xmlns='http://www.w3.org/2000/svg' viewBox='0 0 20 20'%3E%3Cpath fill='none' stroke='%2350575e' stroke-width='2' d='M3 6l7 7 7-7'/%3E%3C/svg%3E") no-repeat right 5px center / 12px;
}
.select2, .format {
  height: 24px;
  background: #fff url("data:image/svg+xml,%3Csvg xmlns='http://www.w3.org/2000/svg' viewBox='0 0 10 10'%3E%3Cpath fill='%23888' d='M0 2h10L5 8z'/%3E%3C/svg%3E") no-repeat right 5px center / 7px;
}
.format {
  background: #fff url("data:image/svg+xml,%3Csvg xmlns='http://www.w3.org/2000/svg' viewBox='0 0 10 10'%3E%3Cpath fill='%2350575e' d='M0 1h10L5 9z'/%3E%3C/svg%3E") no-repeat right 5px center / 7px;
}
textarea {
  padding: 4px 6px;
}

.box {
  border: 1px solid var(--line);
  background: #fff;
}
.box-head {
  display: flex;
  align-items: center;
  height: 31px;
  padding: 0 10px;
  border-bottom: 1px solid var(--line);
  color: #787c82;
}
.box-head h2 {
  margin-right: auto;
  font-size: 12px;
  font-weight: 600;
  color: var(--dark);
}
.box-head button {
  display: grid;
  place-items: center;
  width: 22px;
  height: 22px;
}
.box-head button:last-child {
  width: 18px;
  margin: 0 -4px 0 6px;
}
.box-head svg {
  width: 13px;
  height: 13px;
}
.box-head .tri {
  width: 7px;
  height: 7px;
}
.label, .strong {
  display: block;
  font-weight: 500;
  color: #2c3338;
}
.strong {
  font-weight: 600;
}
.req {
  color: #f00;
}
.hint {
  color: #667085;
}

/* tour content */
.acf-field {
  padding: 13px;
}
.intro {
  border-bottom: 1px solid #eaecf0;
}
.group {
  display: grid;
  grid-template-columns: 1fr 1fr 2fr 1fr;
  margin-top: 8px;
  border: 1px solid #dfe1e5;
}
.cell {
  position: relative;
  min-width: 0;
  padding: 13px;
  border-left: 1px solid #eaecf0;
}
.cell:first-child {
  border-left: 0;
}
.group .label {
  margin-bottom: 8px;
}
.body-copy {
  height: 140px;
  margin-bottom: 5px;
}
.marker {
  position: absolute;
  display: grid;
  place-items: center;
  width: 84px;
  height: 80px;
  border-radius: 30px;
  background: rgba(255, 255, 255, 0.87);
  box-shadow: 0 0 6px 7px rgba(255, 255, 255, 0.87);
  color: #000;
  font-family: 'Noto Sans', 'Open Sans', sans-serif;
  font-size: 56px;
  line-height: 80px;
}
.one {
  left: calc(50% - 57px);
  top: 42px;
}
.stops {
  padding-top: 8px;
}
.stops-head {
  display: flex;
  align-items: center;
  justify-content: space-between;
  margin-bottom: 2px;
}
.stops-head .btn {
  padding: 0 4px;
}
.btn svg {
  width: 14px;
  height: 14px;
}
.stops-head svg {
  color: #646970;
}
.repeater {
  display: grid;
  grid-template-columns: 27px 1fr 27px;
  margin-right: -1px;
  border: 1px solid #dfe1e5;
}
.handle {
  display: grid;
  place-items: center;
  border-right: 1px solid #dfe1e5;
  background: #f4f4f4;
  color: #a7aaad;
}
.end {
  border-right: 0;
  border-left: 1px solid #dfe1e5;
  background: #f9f9f9;
}
.fields {
  min-width: 0;
}
.row {
  display: grid;
}
.thirds {
  grid-template-columns: 33fr 33fr 34fr;
  min-height: 119px;
  border-bottom: 1px solid #eaecf0;
}
.halves {
  grid-template-columns: 1fr 1fr;
  min-height: 408px;
}
.thirds .label {
  margin-bottom: 4px;
}
.thirds .hint {
  margin-bottom: 9px;
}
.thirds .cell:last-child {
  padding-right: 24px;
}
.edit-post {
  display: block;
  margin-bottom: 9px;
}
.post-select {
  position: relative;
}
.post-select svg {
  position: absolute;
  left: 8px;
  top: 7px;
  width: 11px;
  height: 11px;
}
.post-select select {
  padding-left: 26px;
}
.scroll-area {
  position: relative;
}
.scroll-area textarea {
  height: 42px;
  padding-right: 20px;
  overflow: hidden;
}
.mini-bar {
  position: absolute;
  top: 1px;
  right: 1px;
  width: 13px;
  height: 28px;
  border-left: 1px solid #eee;
  border-bottom: 1px solid #e3e3e3;
  background: #fafafa;
}
.mini-bar::after {
  content: "";
  position: absolute;
  top: 1px;
  left: 3px;
  width: 7px;
  height: 16px;
  border-radius: 4px;
  background: #c1c1c1;
}
.two {
  left: 157px;
  top: 42px;
}
.halves .label {
  margin-bottom: 7px;
}
.file {
  display: flex;
  border: 1px solid #d0d5dd;
}
.file-icon {
  display: grid;
  place-items: center;
  width: 58px;
  height: 70px;
  border-right: 1px solid #d0d5dd;
  background: var(--grey);
}
.file-icon svg {
  width: 40px;
  height: 53px;
}
.file-info {
  padding: 8px;
  line-height: 17px;
}
.file-info a {
  text-decoration: none;
}
.file-info b {
  color: var(--dark);
}
.editor-tools {
  display: flex;
  align-items: flex-start;
  height: 29px;
}
.editor-tools .btn {
  margin-right: auto;
  padding: 0 7px;
}
.tab {
  position: relative;
  z-index: 1;
  height: 24px;
  margin: 5px 0 0 4px;
  padding: 0 6px;
  border: 1px solid #dcdcde;
  border-bottom: 0;
  background: var(--grey);
  color: #646970;
}
.tab.on {
  height: 25px;
  background: #f6f7f7;
  color: #50575e;
}
.editor {
  position: relative;
  border: 1px solid #dcdcde;
}
.toolbar {
  display: flex;
  flex-direction: column;
  gap: 4px;
  padding: 4px 4px 5px;
  border-bottom: 2px solid #dcdcde;
  background: #f6f7f7;
}
.tools {
  display: flex;
  align-items: center;
  gap: 3px;
  height: 24px;
  color: #50575e;
}
.tools button {
  display: grid;
  place-items: center;
  width: 24px;
  height: 24px;
  border-radius: 2px;
}
.tools svg {
  width: 13px;
  height: 13px;
}
.tools .format {
  width: 94px;
  height: 22px;
  border-color: #dcdcde;
  border-radius: 0;
}
.tools .bold {
  font-size: 14px;
  font-weight: 700;
}
.tools .italic {
  font-family: 'Liberation Mono', monospace;
  font-size: 16px;
  font-style: italic;
  font-weight: 700;
}
.tools .pressed {
  border: 1px solid #50575e;
  background: #f0f0f1;
}
.tools .pressed svg {
  width: 16px;
  height: 16px;
}
.tools .colour {
  width: 16px;
  height: 16px;
  margin: 2px 0 0 4px;
  border-bottom: 2px solid #50575e;
  border-radius: 0;
  font-size: 13px;
  line-height: 13px;
}
.tools .caret {
  width: 12px;
  margin-right: 3px;
}
.tools .caret svg, .tools .small {
  width: 7px;
  height: 7px;
}
.tools .omega {
  font-size: 14px;
  font-weight: 600;
}
.tools .table-btn {
  display: flex;
  align-items: center;
  justify-content: center;
  gap: 6px;
  width: 36px;
}
.tools .off {
  color: #b4b6b9;
}
.editor-body {
  min-height: 260px;
  padding: 12px 0 12px 8px;
  outline: 0;
  background: #fff;
  color: #333;
  font-family: 'Liberation Serif', Georgia, serif;
  font-size: 15px;
  line-height: 20px;
}
.three {
  left: 221px;
  top: 94px;
}

/* right column */
.side {
  display: flex;
  flex-direction: column;
  gap: 17px;
}
.box-body {
  padding: 11px 9px;
}
.lang-row {
  display: flex;
  align-items: center;
  gap: 12px;
  padding: 10px 3px 11px;
}
.lang-row select {
  width: 68px;
}
.trans-row {
  display: flex;
  justify-content: space-between;
  padding-right: 8px;
}
.trans-row svg {
  width: 14px;
  height: 15px;
  color: #dcdcde;
}
.languages .box-body {
  padding-bottom: 21px;
}
.publish-info {
  display: flex;
  flex-direction: column;
  gap: 11px;
  padding: 17px 8px 6px;
  line-height: 17px;
}
.publish-info svg {
  width: 15px;
  height: 15px;
  margin-right: 6px;
  vertical-align: -4px;
  color: #8c8f94;
}
.publish-info b {
  color: #2c3338;
}
.publish-actions {
  padding: 9px 8px;
  border-top: 1px solid #dcdcde;
  background: #f6f7f7;
}
.actions-row {
  display: flex;
  align-items: center;
  justify-content: space-between;
  margin-top: 9px;
}
.bin {
  color: #b32d2e;
}
.update {
  height: 26px;
  padding: 0 10px;
  border-radius: 3px;
  background: var(--blue);
  color: #fff;
  font-weight: 500;
}
.box-body input#order {
  width: 46px;
  margin-top: 5px;
}
.attributes .box-body {
  padding-bottom: 8px;
}
.auth-body {
  padding: 13px 3px 14px 13px;
}
.auth-body .hint {
  margin: 4px 0 9px;
}
.switch {
  display: flex;
  align-items: center;
  width: 71px;
  height: 26px;
  padding: 1px;
  border: 1px solid #a7aaad;
  border-radius: 5px;
  background: #f6f7f7;
}
.switch input {
  position: absolute;
  opacity: 0;
}
.knob {
  width: 34px;
  height: 22px;
  margin-right: 10px;
  border: 1px solid #8c8f94;
  border-radius: 3px;
  background: #fff;
}

/* over the page */
.scrollbar {
  grid-column: 3;
  grid-row: 1 / 3;
  padding: 2px 3px;
  background: #fafafa;
}
.scrollbar span {
  display: block;
  width: 6px;
  height: 196px;
  border-radius: 3px;
  background: #c1c1c1;
}
.support {
  position: fixed;
  right: 21px;
  bottom: 29px;
  display: flex;
  align-items: center;
  gap: 7px;
  height: 38px;
  padding: 0 19px;
  border-radius: 19px;
  background: #232b65;
  color: #fff;
  font-size: 13px;
  font-weight: 700;
}
.support svg {
  width: 17px;
  height: 17px;
}
.status {
  position: fixed;
  left: 0;
  bottom: 0;
  padding: 0 5px 1px 4px;
  border-top-right-radius: 3px;
  background: #202124;
  color: #d5d7da;
  font-size: 10px;
  box-shadow: 0 0 6px rgba(0, 0, 0, 0.3);
}
```
